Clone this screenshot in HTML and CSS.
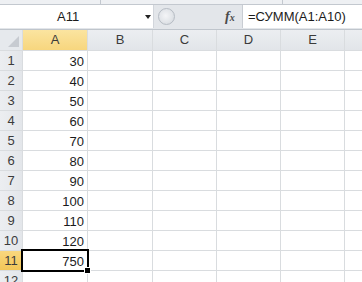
FILE: index.html
```html
<!DOCTYPE html>
<html>
<head>
<meta charset="utf-8">
<link rel="stylesheet" href="styles.css">
</head>
<body>
<div class="app">
  <div class="topstrip"><span class="sep s1"></span><span class="sep s2"></span></div>
  <div class="fbar">
    <div class="namebox"><span class="ref">A11</span><span class="arrow"></span></div>
    <div class="mid">
      <span class="knob"></span>
      <span class="fx"><i>f</i><span class="x">x</span></span>
    </div>
    <div class="formula">=СУММ(A1:A10)</div>
  </div>
  <div class="sheet">
    <div class="corner"><span class="tri"></span></div>
    <div class="ch sel">A</div><div class="ch">B</div><div class="ch">C</div><div class="ch">D</div><div class="ch">E</div><div class="ch"></div>

    <div class="rh">1</div><div class="c num">30</div><div class="c"></div><div class="c"></div><div class="c"></div><div class="c"></div><div class="c"></div>
    <div class="rh">2</div><div class="c num">40</div><div class="c"></div><div class="c"></div><div class="c"></div><div class="c"></div><div class="c"></div>
    <div class="rh">3</div><div class="c num">50</div><div class="c"></div><div class="c"></div><div class="c"></div><div class="c"></div><div class="c"></div>
    <div class="rh">4</div><div class="c num">60</div><div class="c"></div><div class="c"></div><div class="c"></div><div class="c"></div><div class="c"></div>
    <div class="rh">5</div><div class="c num">70</div><div class="c"></div><div class="c"></div><div class="c"></div><div class="c"></div><div class="c"></div>
    <div class="rh">6</div><div class="c num">80</div><div class="c"></div><div class="c"></div><div class="c"></div><div class="c"></div><div class="c"></div>
    <div class="rh">7</div><div class="c num">90</div><div class="c"></div><div class="c"></div><div class="c"></div><div class="c"></div><div class="c"></div>
    <div class="rh">8</div><div class="c num">100</div><div class="c"></div><div class="c"></div><div class="c"></div><div class="c"></div><div class="c"></div>
    <div class="rh">9</div><div class="c num">110</div><div class="c"></div><div class="c"></div><div class="c"></div><div class="c"></div><div class="c"></div>
    <div class="rh">10</div><div class="c num">120</div><div class="c"></div><div class="c"></div><div class="c"></div><div class="c"></div><div class="c"></div>
    <div class="rh sel">11</div><div class="c num active">750<span class="handle"></span></div><div class="c"></div><div class="c"></div><div class="c"></div><div class="c"></div><div class="c"></div>
    <div class="rh">12</div><div class="c"></div><div class="c"></div><div class="c"></div><div class="c"></div><div class="c"></div><div class="c"></div>
  </div>
</div>
</body>
</html>
```
FILE: styles.css
```css
html, body {
  margin: 0;
  padding: 0;
  background: #ffffff;
}
.app {
  width: 362px;
  height: 282px;
  overflow: hidden;
  font-family: "Liberation Sans", Arial, sans-serif;
  font-size: 13px;
  color: #1b1b1b;
}
.topstrip {
  height: 4px;
  background: #eef0f3;
  border-bottom: 1px solid #c3c8cf;
  position: relative;
}
.sep {
  position: absolute;
  top: 0;
  width: 1px;
  height: 4px;
  background: #c3c8cf;
}
.s1 { left: 100px; }
.s2 { left: 282px; }
.fbar {
  display: flex;
  height: 24px;
  background: #e3e6ea;
}
.namebox {
  width: 153px;
  height: 23px;
  background: #ffffff;
  display: flex;
  align-items: center;
  position: relative;
}
.ref {
  margin-left: 57px;
  line-height: 23px;
}
.arrow {
  position: absolute;
  left: 145px;
  top: 10px;
  width: 0;
  height: 0;
  border-left: 3px solid transparent;
  border-right: 3px solid transparent;
  border-top: 4px solid #222;
}
.mid {
  width: 88px;
  height: 23px;
  display: flex;
  align-items: center;
  border-left: 1px solid #d2d6dc;
}
.knob {
  width: 15px;
  height: 15px;
  margin-left: 4px;
  border-radius: 50%;
  border: 1px solid #b6bcc4;
  background: radial-gradient(circle at 45% 45%, #f4f5f7 0, #e2e5e9 55%, #cfd3d9 100%);
}
.fx {
  margin-left: 50px;
  font-family: "Liberation Serif", "Times New Roman", serif;
  font-size: 14px;
  color: #4a4a4a;
  display: flex;
  align-items: baseline;
}
.fx i {
  font-weight: bold;
  font-style: italic;
}
.fx .x {
  font-style: italic;
  font-weight: bold;
  font-size: 10px;
  margin-left: 0;
}
.formula {
  flex: 1;
  height: 23px;
  background: #ffffff;
  border-left: 1px solid #c9cdd3;
  line-height: 23px;
  padding-left: 5px;
  font-size: 13px;
}
.sheet {
  display: grid;
  grid-template-columns: 22px 64px 64px 63px 63px 63px 1fr;
  grid-template-rows: 20px repeat(12, 19px);
  column-gap: 1px;
  row-gap: 1px;
  background: #d9dcdf;
  border-top: 1px solid #bfc5cc;
}
.corner {
  background: #e6e9ed;
  position: relative;
}
.tri {
  position: absolute;
  right: 3px;
  bottom: 3px;
  width: 0;
  height: 0;
  border-left: 11px solid transparent;
  border-bottom: 11px solid #c7cbd1;
}
.ch {
  background: linear-gradient(#eceef1, #e2e5e9);
  text-align: center;
  line-height: 20px;
  color: #3b3b3b;
}
.ch.sel {
  background: linear-gradient(#fbe4a0, #f7d67e);
}
.rh {
  background: linear-gradient(90deg, #eceef1, #e3e6ea);
  text-align: center;
  line-height: 20px;
  color: #3b3b3b;
}
.rh.sel {
  background: linear-gradient(#f9d77e, #f3c658);
}
.c {
  background: #ffffff;
  line-height: 21px;
}
.num {
  text-align: right;
  padding-right: 3px;
}
.active {
  position: relative;
  outline: 2px solid #000;
  outline-offset: 0px;
  z-index: 1;
}
.handle {
  position: absolute;
  right: -4px;
  bottom: -4px;
  width: 5px;
  height: 5px;
  background: #000;
  border: 1px solid #fff;
}
```
